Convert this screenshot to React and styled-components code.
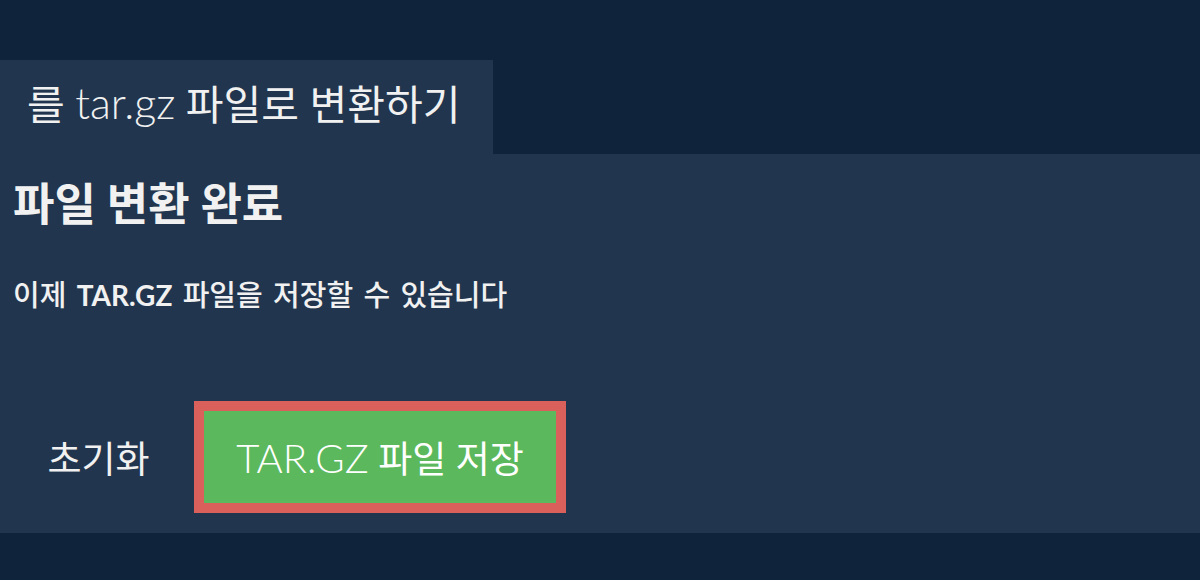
import React from "react";
import styled, { createGlobalStyle } from "styled-components";

const GlobalStyle = createGlobalStyle`
  html, body {
    margin: 0;
    padding: 0;
    background: #0f243a;
    font-family: "Lato", "Noto Sans CJK KR", sans-serif;
    color: #f1f1f1;
  }
`;

const Page = styled.div`
  width: 1200px;
  height: 580px;
  padding-top: 60px;
  box-sizing: border-box;
  background: #0f243a;
`;

const Tab = styled.div`
  display: inline-flex;
  align-items: center;
  height: 94px;
  padding: 0 0 10px 27px;
  width: 493px;
  box-sizing: border-box;
  background: #21364e;
  font-size: 41px;
  font-weight: 400;
  white-space: nowrap;
`;

const Latin = styled.span`
  font-weight: ${(p) => p.$weight || 300};
  font-size: ${(p) => p.$size || "inherit"};
`;

const Panel = styled.div`
  display: flex;
  flex-direction: column;
  height: 379px;
  box-sizing: border-box;
  padding: 22px 13px 20px;
  background: #21364e;
`;

const Heading = styled.h2`
  margin: 0;
  font-size: 45px;
  font-weight: 700;
  line-height: 56px;
`;

const Message = styled.p`
  margin: 47px 0 0;
  font-size: 29px;
  font-weight: 500;
  line-height: 32px;
  word-spacing: 3px;
`;

const Actions = styled.div`
  display: flex;
  align-items: center;
  margin-top: auto;
`;

const ResetButton = styled.button`
  width: 171px;
  padding: 0;
  margin-right: 10px;
  border: none;
  background: transparent;
  color: #f1f1f1;
  font-family: inherit;
  font-size: 37px;
  font-weight: 400;
  text-align: center;
  cursor: pointer;
`;

const SaveButton = styled.button`
  width: 372px;
  height: 112px;
  box-sizing: border-box;
  padding: 0;
  border: 10px solid #d9605b;
  background: #5cb85c;
  color: #ffffff;
  font-family: inherit;
  font-size: 37px;
  cursor: pointer;
`;

export default function App() {
  return (
    <>
      <GlobalStyle />
      <Page>
        <Tab>
          를&nbsp;<Latin $size="43px">tar.gz</Latin>&nbsp;파일로 변환하기
        </Tab>
        <Panel>
          <Heading>파일 변환 완료</Heading>
          <Message>
            이제 <Latin $weight={700} $size="28px">TAR.GZ</Latin> 파일을 저장할 수 있습니다
          </Message>
          <Actions>
            <ResetButton>초기화</ResetButton>
            <SaveButton>
              <Latin $size="40px">TAR.GZ</Latin> 파일 저장
            </SaveButton>
          </Actions>
        </Panel>
      </Page>
    </>
  );
}
